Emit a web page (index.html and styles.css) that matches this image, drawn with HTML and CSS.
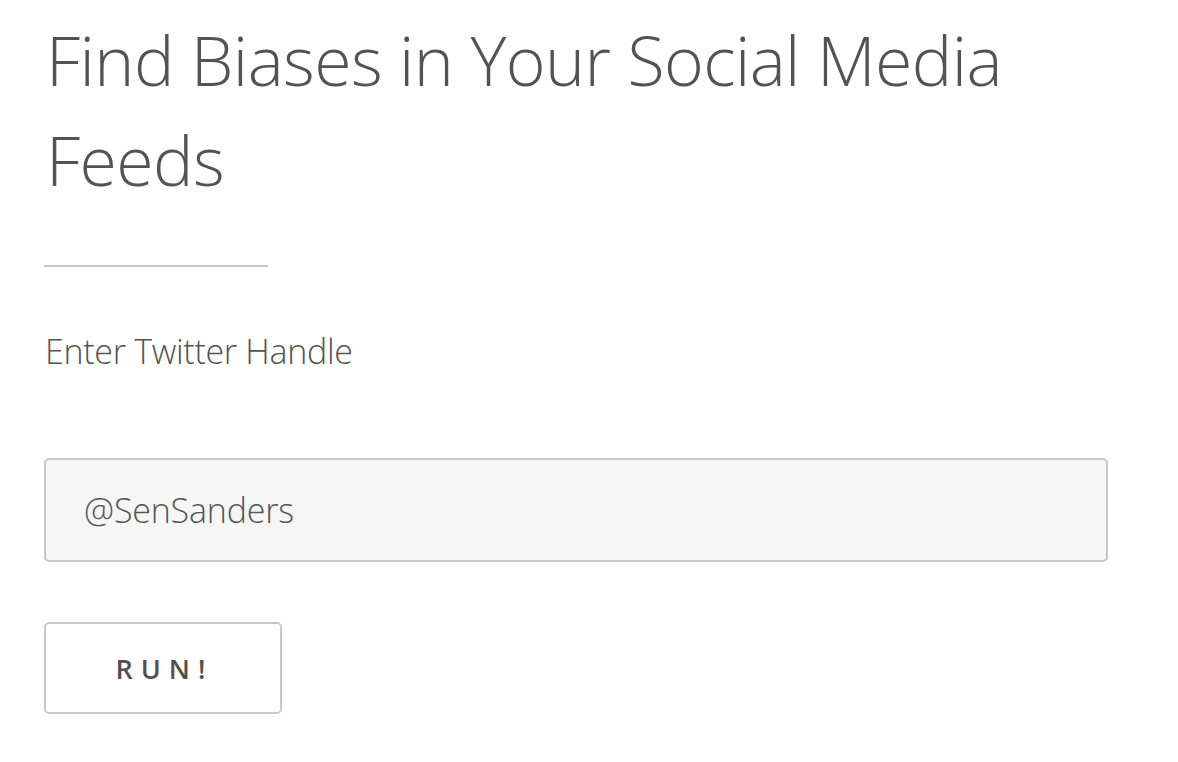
FILE: index.html
```html
<!DOCTYPE html>
<html lang="en">
<head>
<meta charset="utf-8">
<title>Find Biases</title>
<link rel="stylesheet" href="styles.css">
</head>
<body>
<main class="page">
  <h1 class="title">Find Biases in Your Social Media Feeds</h1>
  <hr class="divider">
  <label class="label" for="handle">Enter Twitter Handle</label>
  <input class="field" id="handle" type="text" value="@SenSanders">
  <button class="run" type="button">RUN!</button>
</main>
</body>
</html>
```

FILE: styles.css
```css
html, body {
  margin: 0;
  padding: 0;
  background: #ffffff;
}
body {
  font-family: "Open Sans", "Noto Sans", sans-serif;
  color: #535353;
}
.page {
  display: flex;
  flex-direction: column;
  align-items: flex-start;
  padding: 10px 0 0 44px;
  width: 1064px;
}
.title {
  margin: 0;
  font-weight: 300;
  font-size: 68px;
  line-height: 100px;
  letter-spacing: -0.6px;
  padding-left: 2px;
}
.divider {
  margin: 55px 0 0 0;
  width: 224px;
  height: 0;
  border: 0;
  border-top: 2px solid #c8c8c8;
}
.label {
  margin-top: 64px;
  font-weight: 300;
  font-size: 34px;
  line-height: 40px;
  letter-spacing: -0.3px;
  padding-left: 1px;
}
.field {
  box-sizing: border-box;
  margin-top: 87px;
  width: 1064px;
  height: 104px;
  padding: 0 0 0 38px;
  border: 2px solid #c8c8c8;
  border-radius: 5px;
  background: #f6f6f6;
  font-family: inherit;
  font-weight: 300;
  font-size: 34px;
  letter-spacing: -0.2px;
  color: #555555;
  outline: none;
}
.run {
  box-sizing: border-box;
  margin-top: 60px;
  width: 238px;
  height: 92px;
  border: 2px solid #c8c8c8;
  border-radius: 5px;
  background: #ffffff;
  font-family: inherit;
  font-weight: 600;
  font-size: 27px;
  letter-spacing: 8px;
  padding-left: 9px;
  color: #505050;
}
```
